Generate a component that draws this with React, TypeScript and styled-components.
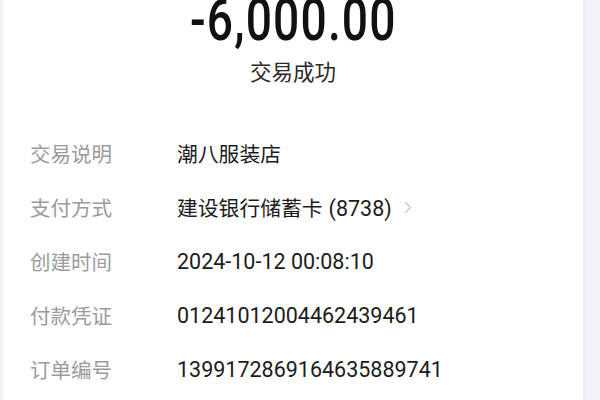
import styled, { createGlobalStyle } from "styled-components";

const GlobalStyle = createGlobalStyle`
  html, body {
    margin: 0;
    padding: 0;
    background: #f3f3f7;
  }
  body {
    font-family: "Noto Sans CJK SC", "Noto Sans", sans-serif;
  }
`

const Page = styled.div`
  display: flex;
  width: 600px;
  height: 400px;
  overflow: hidden;
  padding-left: 3px;
  box-sizing: border-box;
`

const Card = styled.div`
  width: 580px;
  height: 400px;
  background: #ffffff;
  box-shadow: 1px 0 2px rgba(0, 0, 0, 0.04);
  display: flex;
  flex-direction: column;
`

const Header = styled.div`
  display: flex;
  flex-direction: column;
  align-items: center;
  padding-bottom: 40px;
`

const Amount = styled.div`
  font-family: Roboto, "Liberation Sans", sans-serif;
  font-size: 60px;
  font-weight: 500;
  line-height: 40px;
  height: 40px;
  letter-spacing: 1.5px;
  color: #111111;
  transform: scaleX(0.77);
  transform-origin: center;
  white-space: nowrap;
`

const Status = styled.div`
  margin-top: 16px;
  font-size: 21.5px;
  line-height: 30px;
  color: #2a2a2a;
`

const DetailList = styled.div`
  display: grid;
  grid-template-columns: 147px 1fr;
  grid-auto-rows: 54px;
  padding-left: 27px;
`

const Label = styled.div`
  display: flex;
  align-items: center;
  font-size: 20.5px;
  color: #9b9b9b;
`

const Value = styled.div<{ $digits?: boolean }>`
  display: flex;
  align-items: center;
  gap: 12px;
  font-family: ${p => p.$digits ? 'Roboto, "Noto Sans CJK SC", sans-serif' : '"Noto Sans CJK SC", Roboto, sans-serif'};
  font-size: ${p => p.$digits ? '21.5px' : '20.8px'};
  color: #1c1c1c;
  white-space: nowrap;
`

const CardNo = styled.span`
  font-family: Roboto, sans-serif;
  font-size: 21.5px;
  margin-left: 6px;
`

const Chevron = () => (
  <svg width="8" height="13" viewBox="0 0 8 13" fill="none">
    <path d="M1.5 1.5 L6.5 6.5 L1.5 11.5" stroke="#c9c9c9" strokeWidth="1.4" strokeLinecap="round" strokeLinejoin="round" />
  </svg>
)

const details = [
  { label: '交易说明', value: '潮八服装店' },
  { label: '支付方式', value: '建设银行储蓄卡', card: '(8738)', link: true },
  { label: '创建时间', value: '2024-10-12 00:08:10', digits: true },
  { label: '付款凭证', value: '01241012004462439461', digits: true },
  { label: '订单编号', value: '1399172869164635889741', digits: true },
]

function App() {
  return (
    <>
      <GlobalStyle />
      <Page>
        <Card>
          <Header>
            <Amount>-6,000.00</Amount>
            <Status>交易成功</Status>
          </Header>
          <DetailList>
            {details.map((each) =>
              <>
                <Label key={each.label}>{each.label}</Label>
                <Value key={each.label + '-v'} $digits={each.digits}>
                  <span>
                    {each.value}
                    {each.card && <CardNo>{each.card}</CardNo>}
                  </span>
                  {each.link && <Chevron />}
                </Value>
              </>
            )}
          </DetailList>
        </Card>
      </Page>
    </>
  )
}

export default App;
